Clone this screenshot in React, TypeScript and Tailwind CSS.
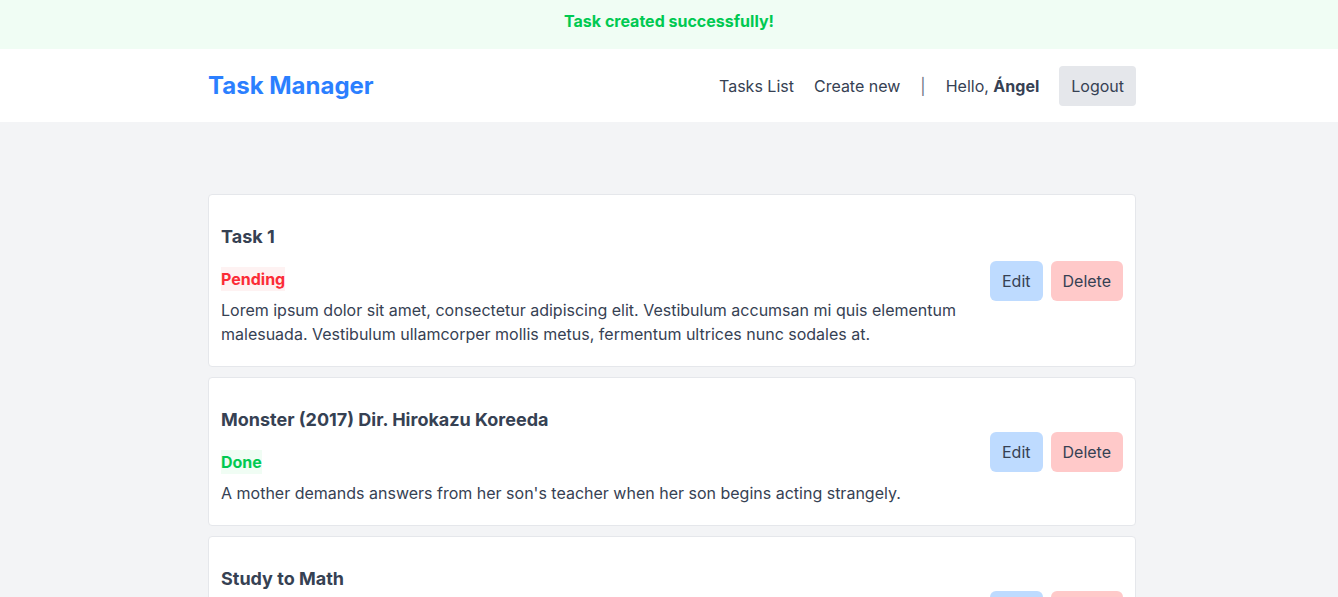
import React from "react";

interface Task {
  id: number;
  title: string;
  done: boolean;
  description: string;
}

const tasks: Task[] = [
  {
    id: 1,
    title: "Task 1",
    done: false,
    description:
      "Lorem ipsum dolor sit amet, consectetur adipiscing elit. Vestibulum accumsan mi quis elementum malesuada. Vestibulum ullamcorper mollis metus, fermentum ultrices nunc sodales at.",
  },
  {
    id: 2,
    title: "Monster (2017) Dir. Hirokazu Koreeda",
    done: true,
    description:
      "A mother demands answers from her son's teacher when her son begins acting strangely.",
  },
  {
    id: 3,
    title: "Study to Math",
    done: false,
    description: "Review algebra and geometry chapters before the exam.",
  },
];

const TaskCard: React.FC<{ task: Task }> = ({ task }) => {
  return (
    <div className="flex items-center justify-between gap-4 bg-white border border-gray-200 rounded p-3">
      <div className="flex-1 pr-4">
        <h3 className="mt-4 mb-4 text-lg font-bold leading-7 text-gray-700">
          {task.title}
        </h3>
        <div className="flex">
          {task.done ? (
            <span className="font-bold leading-6 text-green-500 bg-green-50">Done</span>
          ) : (
            <span className="font-bold leading-6 text-red-500 bg-red-50">Pending</span>
          )}
        </div>
        <p className="mt-[7px] mb-2 text-gray-700 leading-6">{task.description}</p>
      </div>
      <div className="flex gap-2">
        <button
          type="button"
          className="px-3 py-2 rounded-md bg-blue-200 text-gray-700 leading-6"
        >
          Edit
        </button>
        <button
          type="button"
          className="px-3 py-2 rounded-md bg-red-200 text-gray-700 leading-6"
        >
          Delete
        </button>
      </div>
    </div>
  );
};

export default function App() {
  return (
    <div className="min-h-screen bg-gray-100 font-['Inter',sans-serif] text-base">
      <div className="bg-green-50 h-[49px] pt-[9px] text-center">
        <p className="font-bold text-green-500 leading-6">Task created successfully!</p>
      </div>
      <header className="bg-white pl-[6px]">
        <div className="w-[928px] mx-auto flex items-center justify-between py-4 h-[73px]">
          <h1 className="text-2xl font-bold text-blue-500">Task Manager</h1>
          <nav className="flex items-center gap-5 text-gray-700">
            <a href="#">Tasks List</a>
            <a href="#">Create new</a>
            <span className="text-gray-500">|</span>
            <span>
              Hello, <b className="font-bold">Ángel</b>
            </span>
            <button type="button" className="px-3 py-2 rounded bg-gray-200 leading-6">
              Logout
            </button>
          </nav>
        </div>
      </header>
      <div className="pl-[6px]">
        <main className="w-[928px] mx-auto pt-18 flex flex-col gap-[10px]">
          {tasks.map((task) => (
            <TaskCard key={task.id} task={task} />
          ))}
        </main>
      </div>
    </div>
  );
}
